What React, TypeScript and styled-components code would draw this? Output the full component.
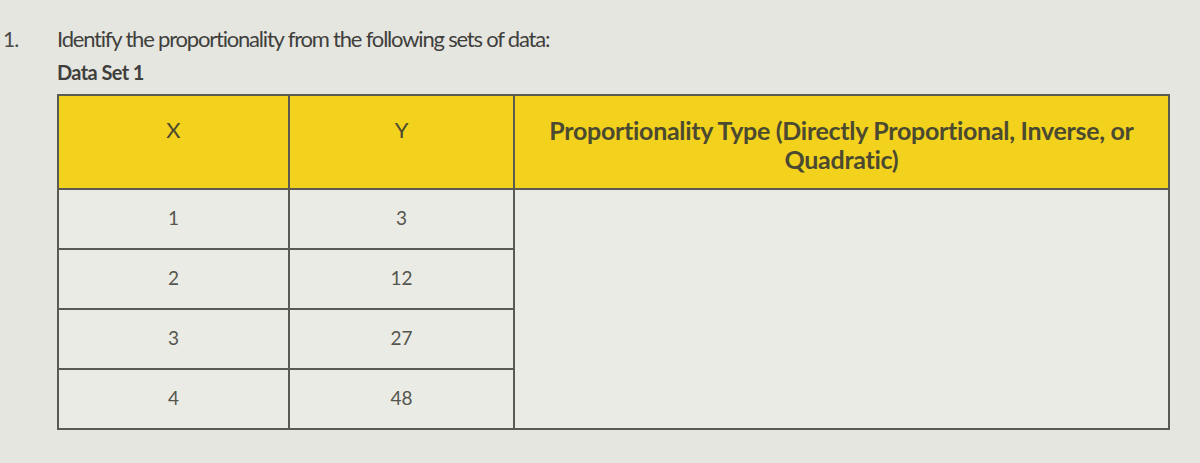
import React from "react";
import styled, { createGlobalStyle } from "styled-components";

const GlobalStyle = createGlobalStyle`
  body {
    margin: 0;
    background: #e6e6e0;
    font-family: Lato, "Open Sans", sans-serif;
  }
`;

const rows = [
  { x: "1", y: "3" },
  { x: "2", y: "12" },
  { x: "3", y: "27" },
  { x: "4", y: "48" },
];

const App: React.FC = () => {
  return (
    <Page>
      <GlobalStyle />
      <Question>
        <QuestionNumber>1.</QuestionNumber>
        <QuestionBody>
          <Prompt>Identify the proportionality from the following sets of data:</Prompt>
          <SetTitle>Data Set 1</SetTitle>
          <DataTable>
            <colgroup>
              <col style={{ width: 231 }} />
              <col style={{ width: 225 }} />
              <col />
            </colgroup>
            <thead>
              <tr>
                <HeadCell>X</HeadCell>
                <HeadCell>Y</HeadCell>
                <HeadCell $wide>
                  Proportionality Type (Directly Proportional, Inverse, or Quadratic)
                </HeadCell>
              </tr>
            </thead>
            <tbody>
              {rows.map((row, i) => (
                <tr key={row.x}>
                  <Cell>{row.x}</Cell>
                  <Cell>{row.y}</Cell>
                  {i === 0 && <AnswerCell rowSpan={rows.length} />}
                </tr>
              ))}
            </tbody>
          </DataTable>
        </QuestionBody>
      </Question>
    </Page>
  );
};

export default App;

const Page = styled.div`
  width: 1200px;
  height: 463px;
  padding: 24px 0 0 3px;
  box-sizing: border-box;
  overflow: hidden;
`;

const Question = styled.div`
  display: flex;
  align-items: flex-start;
`;

const QuestionNumber = styled.span`
  width: 54px;
  font-size: 21px;
  line-height: 30px;
  color: #4a4a48;
  letter-spacing: -1px;
`;

const QuestionBody = styled.div`
  display: flex;
  flex-direction: column;
`;

const Prompt = styled.div`
  font-size: 22px;
  line-height: 30px;
  color: #3f3f3d;
  letter-spacing: -1.2px;
`;

const SetTitle = styled.div`
  font-size: 20px;
  font-weight: 700;
  line-height: 24px;
  margin-top: 6px;
  color: #3f3f3d;
  letter-spacing: -0.6px;
`;

const DataTable = styled.table`
  width: 1113px;
  margin-top: 10px;
  border-collapse: collapse;
  table-layout: fixed;
  background: #ebebe5;
`;

const HeadCell = styled.th<{ $wide?: boolean }>`
  height: ${(p) => (p.$wide ? "86px" : "66px")};
  background: #f3d21e;
  border: 2px solid #5a5a50;
  color: #4b4a30;
  font-weight: ${(p) => (p.$wide ? 700 : 400)};
  font-size: ${(p) => (p.$wide ? "25px" : "22px")};
  line-height: 29px;
  letter-spacing: ${(p) => (p.$wide ? "-0.3px" : "0")};
  padding: ${(p) => (p.$wide ? "6px 16px 0" : "0 0 26px")};
  text-align: center;
`;

const Cell = styled.td`
  height: 54px;
  border: 2px solid #5a5a55;
  color: #55554f;
  font-size: 19px;
  text-align: center;
  padding: 0 0 4px;
`;

const AnswerCell = styled.td`
  border: 2px solid #5a5a55;
  background: #ebebe5;
`;
